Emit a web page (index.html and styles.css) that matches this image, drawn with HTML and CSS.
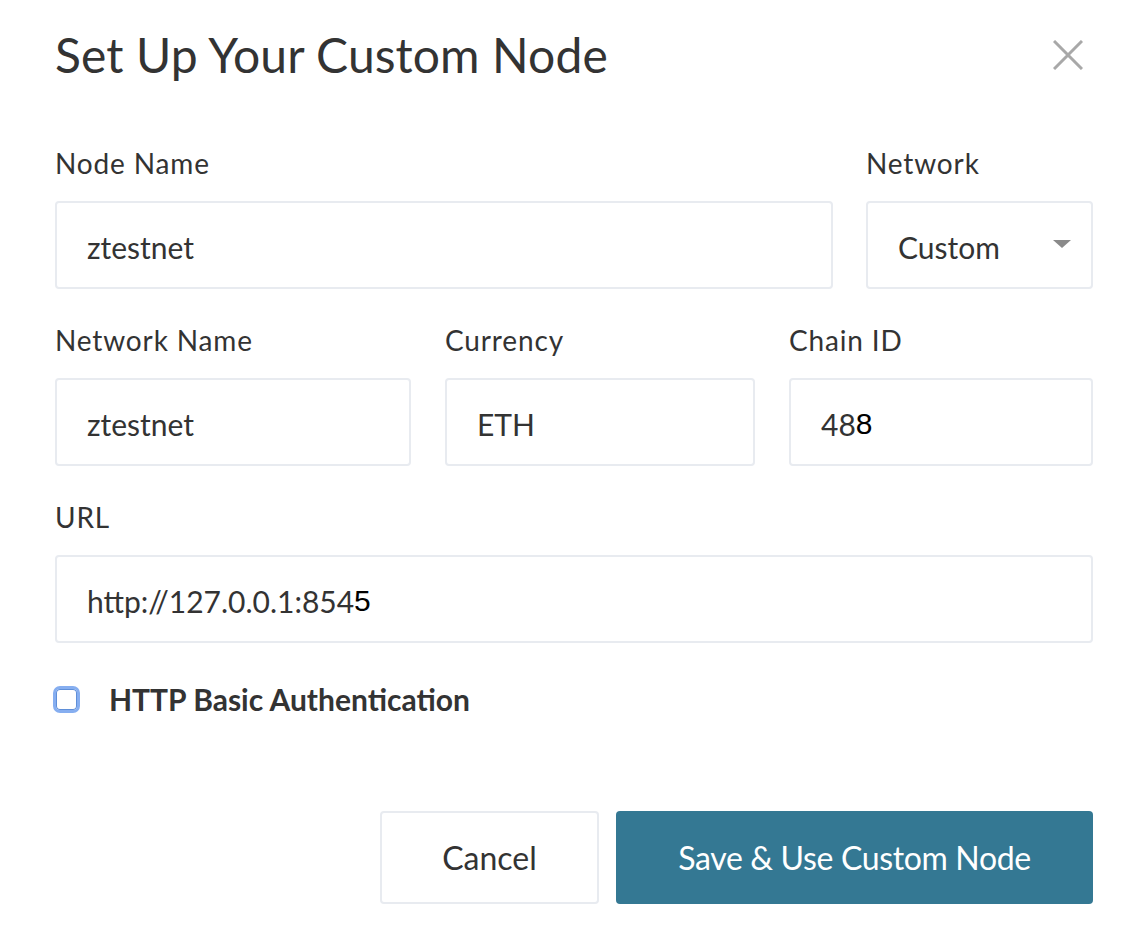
FILE: index.html
```html
<!DOCTYPE html>
<html>
<head>
<meta charset="utf-8">
<link rel="stylesheet" href="styles.css">
</head>
<body>
<div class="dialog">
  <div class="header">
    <h1 class="title">Set Up Your Custom Node</h1>
    <button class="close" aria-label="Close">
      <svg width="30" height="30" viewBox="0 0 30 30"><path d="M1 1 L29 29 M29 1 L1 29" stroke="#a8a8a8" stroke-width="3" fill="none"/></svg>
    </button>
  </div>

  <div class="row row1">
    <div class="field">
      <div class="label">Node Name</div>
      <div class="input">ztestnet</div>
    </div>
    <div class="field">
      <div class="label">Network</div>
      <div class="input select">Custom<span class="arrow"></span></div>
    </div>
  </div>

  <div class="row row2">
    <div class="field">
      <div class="label">Network Name</div>
      <div class="input">ztestnet</div>
    </div>
    <div class="field">
      <div class="label">Currency</div>
      <div class="input">ETH</div>
    </div>
    <div class="field">
      <div class="label">Chain ID</div>
      <div class="input">48<span class="alt">8</span></div>
    </div>
  </div>

  <div class="row">
    <div class="field">
      <div class="label">URL</div>
      <div class="input">http://127.0.0.1:854<span class="alt">5</span></div>
    </div>
  </div>

  <div class="check">
    <span class="box"></span>
    <span class="check-label">HTTP Basic Authentication</span>
  </div>

  <div class="actions">
    <button class="btn btn-cancel">Cancel</button>
    <button class="btn btn-primary">Save &amp; Use Custom Node</button>
  </div>
</div>
</body>
</html>
```

FILE: styles.css
```css
* { box-sizing: border-box; }
html, body { margin: 0; padding: 0; background: #fff; }
body {
  font-family: Lato, "Open Sans", sans-serif;
  color: #333;
}
.dialog {
  width: 1148px;
  padding: 22px 55px 0 55px;
}
.header {
  display: flex;
  justify-content: space-between;
  align-items: flex-start;
}
.title {
  margin: 0;
  font-weight: 400;
  font-size: 48px;
  line-height: 66px;
  color: #333;
  letter-spacing: 0.1px;
}
.close {
  border: 0;
  background: none;
  padding: 0;
  margin: 13px 5px 0 0;
  width: 40px;
  height: 40px;
  display: flex;
  align-items: center;
  justify-content: center;
}
.row {
  display: grid;
  grid-template-columns: 1fr;
  column-gap: 33px;
  margin-top: 34px;
}
.row1 { grid-template-columns: 778px 227px; margin-top: 58px; }
.row2 { grid-template-columns: 356px 310px 304px; column-gap: 34px; }
.label {
  font-size: 28px;
  line-height: 34px;
  margin-bottom: 21px;
  color: #333;
  letter-spacing: 0.85px;
}
.input {
  height: 88px;
  border: 2px solid #e8ebf0;
  border-radius: 4px;
  padding: 4px 30px 0 30px;
  display: flex;
  align-items: center;
  font-size: 30px;
  letter-spacing: 0;
  color: #333;
}
.select { justify-content: space-between; padding-right: 20px; }
.arrow {
  width: 0; height: 0;
  border-left: 9px solid transparent;
  border-right: 9px solid transparent;
  border-top: 8px solid #8a8a8a;
  margin-top: -7px;
}
.alt {
  font-family: "Liberation Sans", Arial, sans-serif;
  color: #000;
  font-size: 30px;
  letter-spacing: 0;
}
.check {
  display: flex;
  align-items: center;
  margin-top: 38px;
  margin-left: -2px;
}
.box {
  width: 27px; height: 27px;
  border: 3px solid #86aef0;
  border-radius: 7px;
  background: #fff;
  box-shadow: inset 0 0 0 1px #5f8fd8;
}
.check-label {
  font-weight: 700;
  font-size: 30px;
  margin-left: 29px;
  color: #333;
  letter-spacing: 0;
}
.actions {
  display: flex;
  justify-content: flex-end;
  gap: 17px;
  margin-top: 94px;
}
.btn {
  height: 93px;
  border-radius: 4px;
  font-family: Lato, "Open Sans", sans-serif;
  font-size: 32px;
  padding: 0;
}
.btn-cancel {
  width: 219px;
  background: #fff;
  border: 2px solid #e8ebf0;
  color: #333;
}
.btn-primary {
  width: 477px;
  background: #347893;
  border: 0;
  color: #fff;
  letter-spacing: -0.35px;
}
```
